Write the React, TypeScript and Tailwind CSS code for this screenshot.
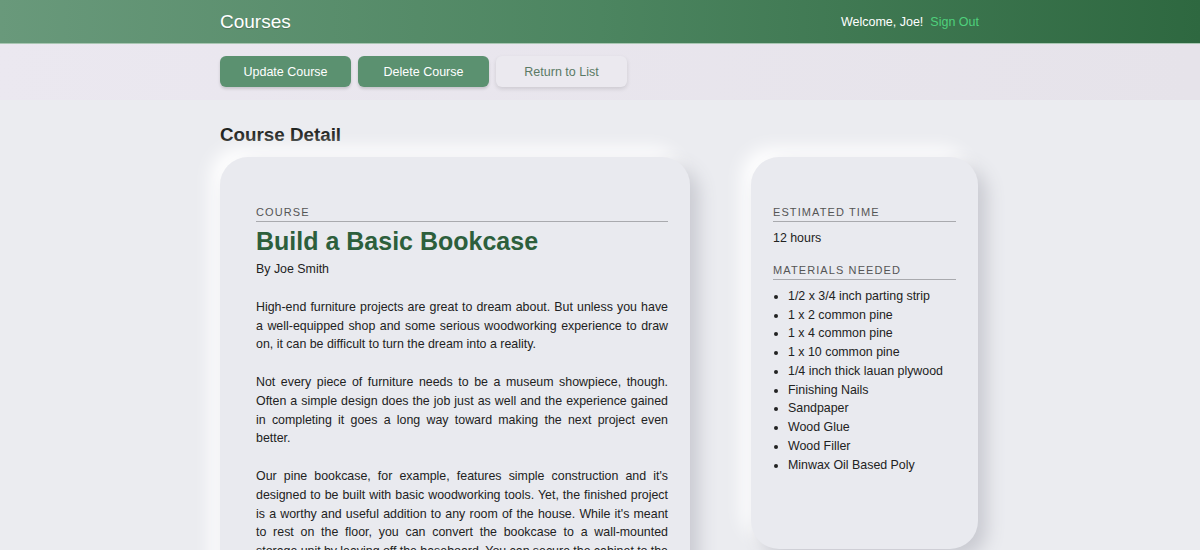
import React from "react";

const materials = [
  "1/2 x 3/4 inch parting strip",
  "1 x 2 common pine",
  "1 x 4 common pine",
  "1 x 10 common pine",
  "1/4 inch thick lauan plywood",
  "Finishing Nails",
  "Sandpaper",
  "Wood Glue",
  "Wood Filler",
  "Minwax Oil Based Poly",
];

const paragraphs = [
  "High-end furniture projects are great to dream about. But unless you have a well-equipped shop and some serious woodworking experience to draw on, it can be difficult to turn the dream into a reality.",
  "Not every piece of furniture needs to be a museum showpiece, though. Often a simple design does the job just as well and the experience gained in completing it goes a long way toward making the next project even better.",
  "Our pine bookcase, for example, features simple construction and it's designed to be built with basic woodworking tools. Yet, the finished project is a worthy and useful addition to any room of the house. While it's meant to\u00a0rest on the floor, you can convert the bookcase to a wall-mounted storage unit by leaving off the baseboard. You can secure the cabinet to the wall through the back panel just below the top board.",
];

function Label({ children }: { children: React.ReactNode }) {
  return (
    <h3 className="border-b border-[#a9aaae] text-[11px] leading-[17px] tracking-[1.1px] text-[#555]">
      {children}
    </h3>
  );
}

const card =
  "rounded-[28px] bg-[#e9eaef] shadow-[9px_9px_18px_#c9cad1,-9px_-9px_18px_#ffffff]";

export default function App() {
  return (
    <div className="min-h-screen bg-[#ebecf0] font-['Liberation_Sans',Arial,sans-serif] text-[12.4px] text-[#222]">
      <header className="h-[44px] border-b border-[#a9c7b3] bg-gradient-to-r from-[#69997b] via-[#4c8560] to-[#2e6840]">
        <div className="mx-auto flex h-full w-[760px] items-center justify-between pt-[2px] pr-[1px]">
          <h1 className="text-[19px] text-white [text-shadow:0_1px_1px_rgba(0,0,0,0.2)]">Courses</h1>
          <div className="flex gap-[7px] text-[12.5px]">
            <span className="text-white">Welcome, Joe!</span>
            <a className="text-[#4fd17c]">Sign Out</a>
          </div>
        </div>
      </header>

      <div className="h-[56px] bg-gradient-to-r from-[#ebe8f0] to-[#e6e3ea]">
        <div className="mx-auto flex w-[760px] gap-[7px] pt-[12px]">
          <button className="h-[31px] w-[131px] rounded-[6px] bg-[#5b9170] pt-[1px] text-[12.5px] text-white shadow-[0_2px_3px_rgba(0,0,0,0.15)]">
            Update Course
          </button>
          <button className="h-[31px] w-[131px] rounded-[6px] bg-[#5b9170] pt-[1px] text-[12.5px] text-white shadow-[0_2px_3px_rgba(0,0,0,0.15)]">
            Delete Course
          </button>
          <button className="h-[31px] w-[131px] rounded-[6px] bg-[#ebe9ef] pt-[1px] text-[12.5px] text-[#5a7a65] shadow-[0_2px_4px_rgba(0,0,0,0.12)]">
            Return to List
          </button>
        </div>
      </div>

      <main className="mx-auto w-[760px] pb-10">
        <h2 className="mt-[24px] text-[18.8px] font-bold leading-[22px] text-[#1f2421]">Course Detail</h2>
        <div className="mt-[11px] flex items-start gap-[61px]">
          <section className={`${card} w-[470px] pb-12 pl-9 pr-[22px] pt-[47px]`}>
            <Label>COURSE</Label>
            <h4 className="mt-[4px] text-[25px] font-bold leading-[30px] text-[#2d5f3c]">Build a Basic Bookcase</h4>
            <p className="mt-[4px] leading-[18.75px]">By Joe Smith</p>
            <p className="mt-[19px] text-justify leading-[18.75px]">{paragraphs[0]}</p>
            <p className="mt-[19px] text-justify leading-[18.75px]">{paragraphs[1]}</p>
            <p className="mt-[19px] text-justify leading-[18.75px] [word-spacing:-0.2px]">{paragraphs[2]}</p>
          </section>

          <aside className={`${card} w-[227px] px-[22px] pb-[75px] pt-[47px]`}>
            <Label>ESTIMATED TIME</Label>
            <p className="mt-[7px] leading-[18.75px]">12 hours</p>
            <div className="mt-[14px]">
              <Label>MATERIALS NEEDED</Label>
            </div>
            <ul className="mt-[7px] list-disc pl-[15px] leading-[18.75px]">
              {materials.map((m) => (
                <li key={m}>{m}</li>
              ))}
            </ul>
          </aside>
        </div>
      </main>
    </div>
  );
}
